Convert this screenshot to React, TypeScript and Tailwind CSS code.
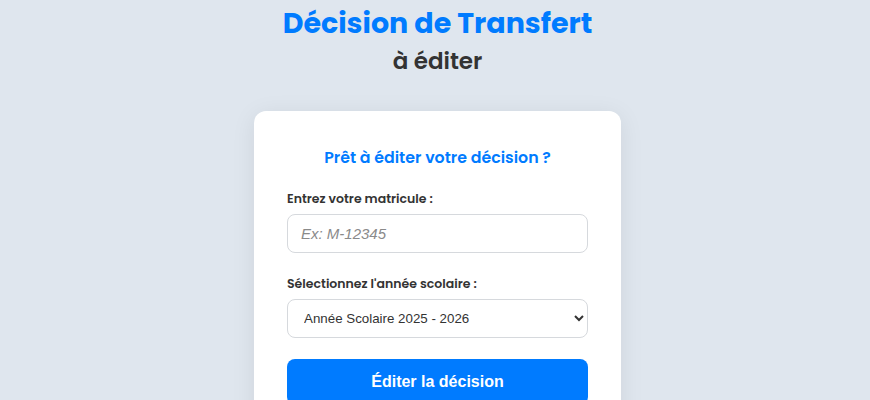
import { useState } from "react";

const years = ["Année Scolaire 2025 - 2026", "Année Scolaire 2024 - 2025"];

export default function App() {
  const [matricule, setMatricule] = useState("");
  const [year, setYear] = useState(years[0]);

  return (
    <div className="min-h-screen bg-[#dfe6ee] flex flex-col items-center pl-[5px] font-['Poppins','Open_Sans',sans-serif]">
      <h1 className="mt-[5px] text-[28.5px] leading-[36px] font-bold text-[#007bff] text-center">
        Décision de Transfert
      </h1>
      <h2 className="mt-[5px] text-[23px] leading-[30px] font-semibold text-[#333] text-center">
        à éditer
      </h2>

      <div className="mt-[35px] w-[367px] bg-white rounded-[12px] shadow-[0_4px_24px_rgba(0,0,0,0.08)] px-[33px] pt-[35px] pb-[30px]">
        <h3 className="text-center text-[15.8px] leading-[24px] font-semibold text-[#007bff]">
          Prêt à éditer votre décision ?
        </h3>

        <label className="block mt-[19px] text-[12.5px] leading-[20px] font-semibold text-[#333]">
          Entrez votre matricule :
        </label>
        <input
          className="mt-[5px] w-full h-[39px] rounded-[8px] border border-[#d6d9dd] px-[13px] text-[15px] font-['Liberation_Sans',Arial,sans-serif] text-[#333] placeholder:italic placeholder:text-[#8a8a8a] outline-none"
          placeholder="Ex: M-12345"
          value={matricule}
          onChange={(e) => setMatricule(e.target.value)}
        />

        <label className="block mt-[21px] text-[12.5px] leading-[20px] font-semibold text-[#333]">
          Sélectionnez l'année scolaire :
        </label>
        <select
          className="mt-[5px] w-full h-[39px] rounded-[8px] border border-[#d6d9dd] pl-[12px] pr-[4px] text-[13.33px] font-['Liberation_Sans',Arial,sans-serif] text-[#333] bg-white outline-none"
          value={year}
          onChange={(e) => setYear(e.target.value)}
        >
          {years.map((y) => (
            <option key={y}>{y}</option>
          ))}
        </select>

        <button className="mt-[21px] w-full h-[46px] rounded-[8px] bg-[#007bff] text-white text-[16px] font-bold font-['Liberation_Sans',Arial,sans-serif]">
          Éditer la décision
        </button>
      </div>
    </div>
  );
}
